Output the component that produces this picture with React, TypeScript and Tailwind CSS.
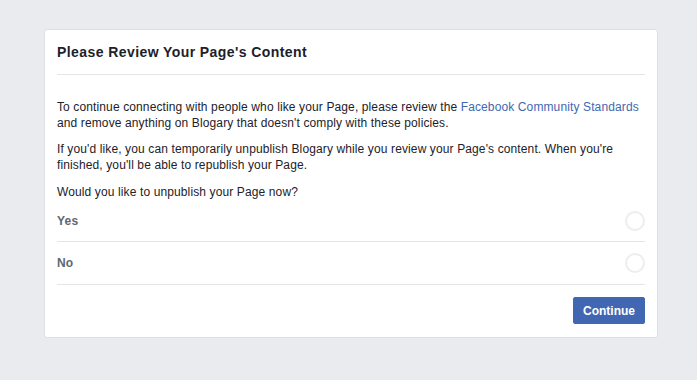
const options = ["Yes", "No"];

export default function App() {
  return (
    <div className="min-h-[380px] w-full bg-[#e9ebee] pt-[29px] pl-[44px] font-['Liberation_Sans',Arial,sans-serif]">
      <div className="w-[614px] rounded-[3px] border border-[#dddfe2] bg-white px-3">
        {/* Header */}
        <div className="border-b border-[#e5e5e5] py-3">
          <h2 className="text-[14px] font-bold leading-5 tracking-[0.42px] text-[#1d2129]">
            Please Review Your Page's Content
          </h2>
        </div>

        {/* Body */}
        <div className="pt-6 text-[12px] leading-4 tracking-[0.12px] text-[#1d2129]">
          <p className="mb-[10px]">
            To continue connecting with people who like your Page, please review the{" "}
            <a className="text-[#4267b2]">Facebook Community Standards</a>
            <br />
            and remove anything on Blogary that doesn't comply with these policies.
          </p>
          <p className="mb-[10px]">
            If you'd like, you can temporarily unpublish Blogary while you review your Page's content. When you're
            <br />
            finished, you'll be able to republish your Page.
          </p>
          <p className="pt-px">Would you like to unpublish your Page now?</p>
        </div>

        <div>
          {options.map((opt, i) => (
            <label
              key={opt}
              className={
                i === 0
                  ? "flex h-[42px] items-center justify-between border-b border-[#e5e5e5]"
                  : "flex h-[43px] items-center justify-between border-b border-[#e5e5e5]"
              }
            >
              <span className="text-[12px] font-bold tracking-[0.2px] text-[#606770]">{opt}</span>
              <span className="h-[20px] w-[20px] rounded-full border-2 border-[#ebedf0] bg-white" />
            </label>
          ))}
        </div>

        <div className="flex justify-end pt-3 pb-[13px]">
          <button className="h-[27px] w-[72px] rounded-[2px] border border-[#4267b2] bg-[#4267b2] text-[12px] font-bold text-white">
            Continue
          </button>
        </div>
      </div>
    </div>
  );
}
